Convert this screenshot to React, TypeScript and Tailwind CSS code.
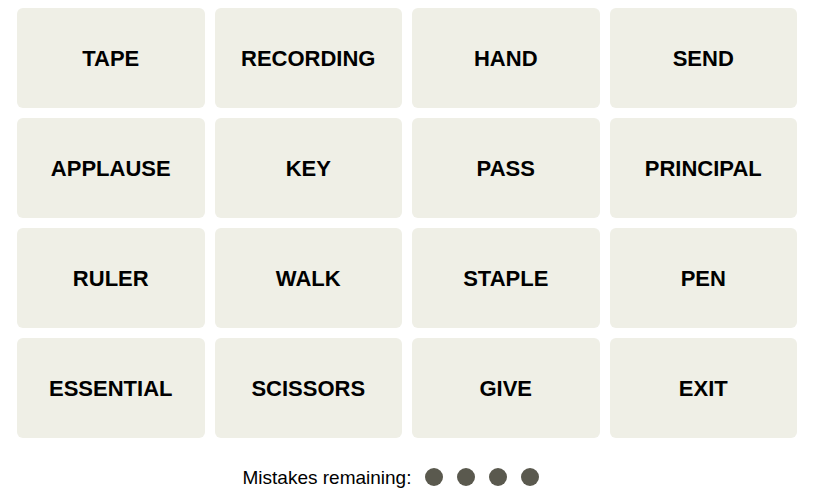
const words = [
  'TAPE', 'RECORDING', 'HAND', 'SEND',
  'APPLAUSE', 'KEY', 'PASS', 'PRINCIPAL',
  'RULER', 'WALK', 'STAPLE', 'PEN',
  'ESSENTIAL', 'SCISSORS', 'GIVE', 'EXIT',
]

export default function App() {
  return (
    <div className="w-[814px] h-[499px] bg-white font-['Liberation_Sans',Arial,sans-serif] text-black">
      <div className="grid grid-cols-4 gap-x-[10px] gap-y-[10px] px-[17px] pt-[8px]">
        {words.map((w) => (
          <div
            key={w}
            className="h-[100px] rounded-[6px] bg-[#efefe6] flex items-center justify-center text-[22px] font-bold uppercase"
          >
            {w}
          </div>
        ))}
      </div>

      <div className="flex items-center justify-center pr-[32px] mt-[29px] h-[20px]">
        <span className="text-[19px] leading-none">Mistakes remaining:</span>
        <div className="flex gap-[14px] ml-[14px]">
          {[0, 1, 2, 3].map((i) => (
            <span key={i} className="w-[18px] h-[18px] rounded-full bg-[#5a594e]" />
          ))}
        </div>
      </div>
    </div>
  )
}
